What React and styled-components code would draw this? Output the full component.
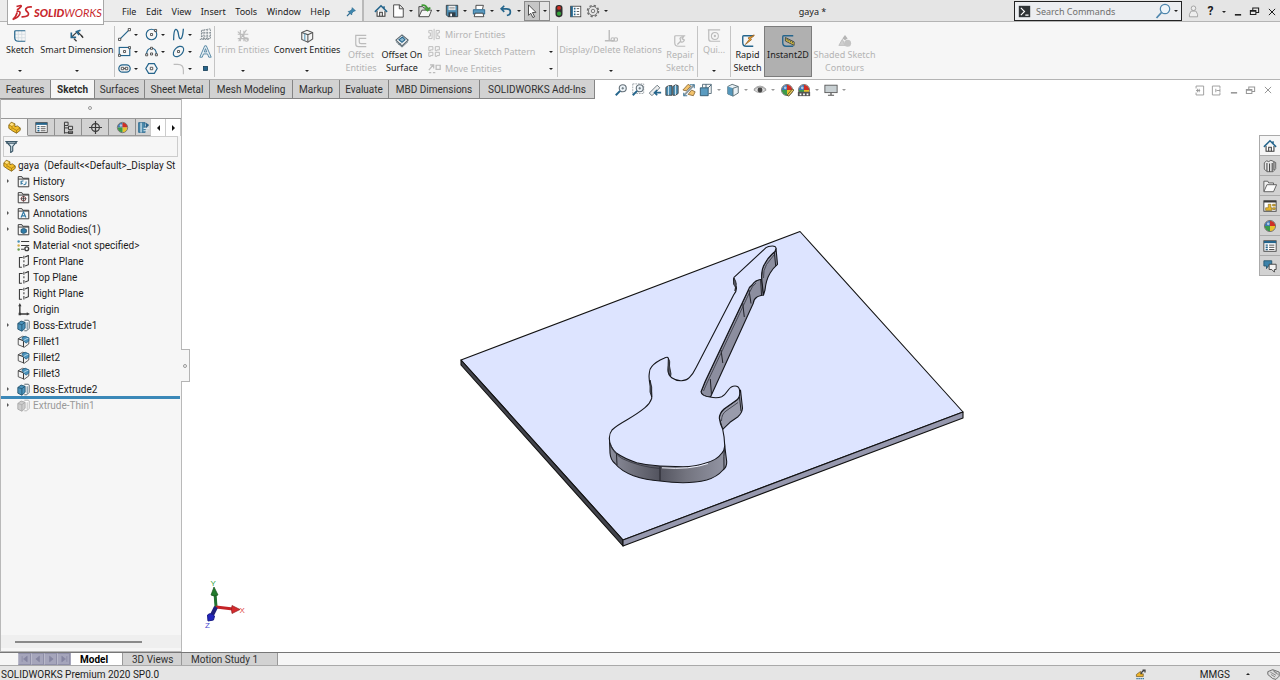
import React from 'react';
import styled, { createGlobalStyle, css } from 'styled-components';

const BLUE = '#25658c';
const GREY = '#bcbcbc';
const DARK = '#3a3a3a';

const line = (color, width = 1.3) => ({ fill: 'none', stroke: color, strokeWidth: width });

const bossExtrude = (stroke, fill, side) => (
  <>
    <path d="M9 1.500h5l1 1v9l-3 3H9" fill="#fff" stroke={side} strokeWidth="1.200" />
    <path d="M1 5.500l4-3 5 1.500v7.500l-4 3.500-5-2.500z" fill={fill} stroke={stroke} />
    <path d="M1 5.500L6 7l4-3M6 7v8M12.500 4v9" {...line(stroke, 0.9)} />
  </>
);

const folder = (
  <path d="M1.500 14.500V2h4.500l1 2h7.500v10.500zM1.500 5h13" fill="#f7f7f7" stroke={DARK} strokeWidth="1.200" />
);

const colorBall = (
  <>
    <path d="M8 8V2a6 6 0 0 0-6 6z" fill="#3f79b5" />
    <path d="M8 8h6a6 6 0 0 0-6-6z" fill="#cf2f26" />
    <path d="M8 8v6a6 6 0 0 0 6-6z" fill="#e7c22d" />
    <path d="M8 8H2a6 6 0 0 0 6 6z" fill="#3c9b4b" />
    <circle cx="8" cy="8" r="6.400" {...line('#56504e', 0.8)} />
    <circle cx="6" cy="5.500" r="1.500" fill="#fff" opacity=".6" />
  </>
);

const part = (
  <>
    <path d="M1 5L4 1.500l4.500 2V7l3-1L15 8.500v3L10.500 15 6 12.500 1 9z" fill="#f3bd27" stroke="#7d5e10" />
    <path d="M1 5L5 6.500V10M5 6.500l3-3M6 9l4.500 2.500L15 8.500M10.500 11.500V15" {...line('#8d6a14', 0.8)} />
    <path d="M4 2.500l3.500 1.200L5 6 2 4.700z" fill="#ffe38a" />
  </>
);

const propertyList = (
  <>
    <rect x="1" y="2" width="14" height="12" fill="#fff" stroke={DARK} />
    <path d="M1 3.500h14" stroke={BLUE} strokeWidth="2.500" />
    <path d="M3 7h2.500M3 9.500h2.500M3 12h2.500" stroke={BLUE} strokeWidth="1.600" />
    <path d="M7 7h6M7 9.500h6M7 12h6" stroke={DARK} />
  </>
);

const house = (
  <>
    <path d="M3.500 8v6h9V8" fill="#fff" stroke={DARK} strokeWidth="1.200" />
    <path d="M1 9l7-7 7 7M11.500 2.500v3" {...line(BLUE, 1.700)} />
    <path d="M6.500 14V9.500h3V14" {...line(DARK, 1.200)} />
  </>
);

const lens = (
  <>
    <circle cx="10" cy="6" r="4" fill="#eef5fa" stroke="#66727a" strokeWidth="1.300" />
    <path d="M7 9l-5 5" stroke={BLUE} strokeWidth="2.300" />
    <path d="M8.500 6h3M10 4.500v3" stroke="#66727a" />
  </>
);

const fillet = (
  <>
    <path d="M1.500 4.500L7 1.500l7.500 2v7.500L9 15l-7.500-3z" fill="#f4f4f4" stroke={DARK} />
    <path d="M1.500 4.500L8 7v8" {...line(DARK)} />
    <path d="M6 3.500l4-2 4.500 2v4L11 10 8 7z" fill="#4c94bd" stroke={BLUE} />
    <path d="M8 7l3-2 3-1" {...line('#cfe5f0', 1)} />
  </>
);

const plane = (
  <path
    d="M7 3H3v12h3M10 13.500l4-1.500V.5l-4 2M8.500 1v3.500M8.500 6.500V9M8.500 11v4.500"
    {...line(DARK, 1.300)}
  />
);

const sketchCorner = (color, lineWidth = 1.400) => (
  <path d="M14 2H3Q2 2 2 3v7q0 4 4 4h8" {...line(color, lineWidth)} />
);

const ICONS = {
  house,
  newDoc: <path d="M3 1h7l4 4v10H3zM9.500 1v4.500H14" fill="#fff" stroke={DARK} />,
  open: (
    <>
      <path d="M1 14V3h4.500l1 1.500H12V9z" fill="#d9d9d9" stroke={DARK} />
      <path d="M1 14.500l3.500-7.500h11l-3 7.500z" fill="#f6f6f6" stroke={DARK} />
      <path d="M4 1.500q6-1 7 5M7.500 5l3.500 2.500L14 4" {...line('#3f9b34', 1.900)} />
    </>
  ),
  save: (
    <>
      <path d="M1.500 1.500h13v13h-11l-2-2z" fill="#4b8bb0" stroke={DARK} />
      <rect x="4" y="2" width="8" height="5" fill="#eee" />
      <path d="M5 4h6M5 5.500h6" stroke="#888" strokeWidth=".7" />
      <rect x="4" y="9.500" width="8" height="5" fill="#303e48" />
      <rect x="6" y="11" width="2" height="3" fill="#fff" />
    </>
  ),
  print: (
    <>
      <path d="M4.500 6V1.500H13L12 6" fill="#fff" stroke={DARK} />
      <path d="M1.500 6.500h13v5h-13z" fill="#5a9ac0" stroke={BLUE} />
      <path d="M3.500 10.500h9l1 4h-11z" fill="#fff" stroke={DARK} />
    </>
  ),
  undo: <path d="M6 2L2.500 5.500 6 9M3 5.500h5.500q4.500 0 4.500 3.500t-4 4" {...line(BLUE, 1.900)} />,
  cursor: <path d="M4 1l8.500 8.500-4 .3 2.500 4.700-2 1-2.500-5L4 13z" fill="#fff" stroke={DARK} />,
  traffic: (
    <>
      <rect x="4" y="1" width="8" height="14" rx="3.500" fill="#303030" />
      <circle cx="8" cy="4.500" r="2.200" fill="#d02f25" />
      <circle cx="8" cy="11" r="2.400" fill="#35a33b" />
    </>
  ),
  options: (
    <>
      <rect x="2" y="1.500" width="12.500" height="13" fill="#fff" stroke={DARK} />
      <path d="M3.500 1.500v13" stroke={BLUE} strokeWidth="2.500" />
      <path d="M6 4.500h2M6 8h2M6 11.500h2" stroke={BLUE} strokeWidth="2" />
      <path d="M9.500 4.500h3M9.500 8h3M9.500 11.500h3" stroke={DARK} />
    </>
  ),
  gear: (
    <>
      <circle cx="8" cy="8" r="6.300" {...line('#6a6a6a', 1.700)} strokeDasharray="2.600 2.350" />
      <circle cx="8" cy="8" r="5.200" {...line('#6a6a6a', 1)} />
      <circle cx="8" cy="8" r="2" {...line('#6a6a6a', 1)} />
    </>
  ),
  pin: (
    <>
      <path d="M10 1l5 5-2.500.7-3 3-.5 3-5.500-5.500 3-.7 3-3z" fill="#3f87ae" stroke={BLUE} />
      <path d="M6 10l-4.500 4.500" stroke={BLUE} strokeWidth="1.700" />
    </>
  ),
  user: (
    <>
      <circle cx="8" cy="4" r="2.800" fill="#eee" stroke="#969696" />
      <path d="M5 7.500h6l2 4v3H3v-3z" fill="#eee" stroke="#969696" />
    </>
  ),
  console: (
    <>
      <rect x="1" y="1" width="14" height="14" fill="#2f3336" />
      <path d="M3.500 3.500L8 8l-4.500 4.500M9 12.500h4" {...line('#fff', 1.400)} />
    </>
  ),
  search: (
    <>
      <circle cx="10" cy="6" r="4.700" fill="#eef5fa" stroke="#4e86ad" strokeWidth="1.200" />
      <path d="M6.500 9.500L1.500 15" stroke="#4e86ad" strokeWidth="1.800" />
    </>
  ),
  minimize: <path d="M3 12.500h10" stroke="currentColor" strokeWidth="2.500" />,
  restore: <path d="M2 6.500h8v6H2zM2 7.500h8M5.500 6V3h8.500v6.500h-4" {...line('currentColor', 1.500)} />,
  close: <path d="M3 3l10 10M13 3L3 13" {...line('currentColor', 1.600)} />,
  dockLeft: <path d="M3 5V1.500h11v13H3V11M3 8h6M7.500 5.500v5M5 5.500v5" {...line('currentColor', 1.300)} />,
  dockRight: <path d="M13 5V1.500H2v13h11V11M7 5.500v5M13 5.500v5M8 8h5" {...line('currentColor', 1.300)} />,

  sketch: (
    <>
      <path d="M6 2v12M10 2v12M14 2v12M2 6h12M2 10h12" {...line('#d4dce1', 1)} />
      {sketchCorner(BLUE)}
    </>
  ),
  smartDim: (
    <>
      <path d="M2 9l6.500-6 6 6" {...line(DARK, 1.400)} />
      <path d="M1.500 4v5.500H7M12 1.500L7.500 3l3 4" {...line(BLUE, 1.900)} />
      <path d="M4.500 11l3 3M12.500 7l2.500 3" stroke={DARK} strokeWidth="1.600" />
    </>
  ),
  line: (
    <>
      <path d="M2 14L14 2" stroke={BLUE} strokeWidth="1.500" />
      <path d="M.6 12.600h2.800v2.800H.6zM12.600.6h2.800v2.800h-2.800z" fill="#fff" stroke={DARK} />
    </>
  ),
  circle: (
    <>
      <circle cx="8" cy="8" r="6.500" {...line(BLUE, 1.400)} />
      <path d="M6.800 6.800h2.500v2.500H6.800zM11.800 1.800h2.500v2.500h-2.500z" fill="#fff" stroke={DARK} />
    </>
  ),
  spline: <path d="M2 15C2-3 7 0 8 8s5 8 6-7" {...line(BLUE, 1.600)} />,
  sketchPlane: (
    <path d="M3 3l11-2v12H3zM3 6h11M3 10h11M6 2v11M10 2v11M1 14h11" {...line('#69757c', 1)} strokeDasharray="2 1" />
  ),
  rect: (
    <>
      <rect x="1.500" y="3" width="13" height="10" {...line(BLUE, 1.400)} />
      <path d="M6.800 6.800h2.500v2.500H6.800zM.5 11.500h2.500V14H.5zM13 2h2.500v2.500H13z" fill="#fff" stroke={DARK} />
    </>
  ),
  arc: (
    <>
      <path d="M2 12q0-8 6-8t6 8" {...line(BLUE, 1.400)} />
      <path d="M.8 10.800h2.500v2.500H.8zM12.800 10.800h2.500v2.500h-2.500zM6.800 9.800h2.500v2.500H6.800zM6.800 2.800h2.500v2.500H6.800z" fill="#fff" stroke={DARK} />
    </>
  ),
  ellipse: (
    <>
      <ellipse cx="8" cy="8" rx="7.500" ry="5" transform="rotate(-45 8 8)" {...line(BLUE, 1.400)} />
      <path d="M6.800 6.800h2.500v2.500H6.800z" fill="#fff" stroke={DARK} />
    </>
  ),
  textTool: (
    <path d="M1 15L7 1h2l6 14h-3l-1.500-4h-5L4 15zM6.500 8.500h3L8 4.500z" fill="#e8f0f5" stroke="#3f7799" />
  ),
  slot: (
    <>
      <rect x="1" y="3.500" width="14" height="9" rx="4.500" {...line(BLUE, 1.500)} />
      <path d="M4 6.500h3v3H4zM9 6.500h3v3H9zM7 8h2" fill="#fff" stroke={DARK} />
    </>
  ),
  polygon: (
    <>
      <path d="M4.500 2h7L15 8l-3.500 6h-7L1 8z" {...line(BLUE, 1.500)} />
      <path d="M6.500 6.500h3v3h-3z" fill="#fff" stroke={DARK} />
    </>
  ),
  filletTool: <path d="M2 3h5q7 0 7 7v5" {...line(GREY, 1.400)} />,
  point: <rect x="5.500" y="5.500" width="5" height="5" fill={BLUE} stroke="#173e56" />,
  trim: (
    <>
      <path d="M2 3l12 10M5 1v13M12 1L3 14M2 11h12M9 2v12M2 6h12" {...line(GREY, 1.200)} />
      <circle cx="12" cy="12" r="2" {...line(GREY, 1.300)} />
    </>
  ),
  convert: (
    <>
      <path d="M2 4l6-2.500L14.500 4v7.500L9 15l-7-3z" fill="#f4f4f4" stroke="#555" strokeWidth="1.200" />
      <path d="M2 4l7 2.500V15M9 6.500L14.500 4" {...line('#555', 1.200)} />
      <path d="M5.500 5v8" stroke="#5d9bbb" strokeWidth="1.300" />
    </>
  ),
  offset: <path d="M14 1.500H2v10q0 3 3 3h9M14 5H6v4q0 2 2 2h6" {...line(GREY, 1.400)} />,
  offsetSurface: (
    <>
      <path d="M1 7l7-6 7 6-7 6.500z" fill="#f2f4f5" stroke="#55626a" strokeWidth="1.200" />
      <path d="M4.500 6.500l4-3 3 3-3.500 3z" fill="#8fb9d0" stroke={BLUE} strokeWidth="1.200" />
      <path d="M1 8.500L8 15l7-6.500M4 12l3-1" {...line('#60727d', 1.100)} />
    </>
  ),
  mirror: <path d="M7.500 1v14M1 3h4v10H1V10h2V6H1zM14 3h-4v10h4V10h-2V6h2z" {...line(GREY, 1.100)} />,
  pattern: <path d="M1 2h5v4H3v1H1zM9 2h5v4h-3v1H9zM1 9h5v4H3v1H1zM9 9h5v4h-3v1H9z" {...line(GREY, 1.200)} />,
  move: <path d="M1 10l5-6M2.500 3.500H7V8M10 4h5v5h-5zM1 13h3M6 13h3" {...line(GREY, 1.500)} />,
  relations: (
    <>
      <path d="M6 1v12M1 13.500h11" {...line(GREY, 1.600)} />
      <circle cx="10" cy="12" r="2" {...line(GREY)} />
      <circle cx="13.500" cy="12" r="2" {...line(GREY)} />
    </>
  ),
  repair: (
    <>
      {sketchCorner(GREY)}
      <path d="M5 12l4-4M8 5q1-2 4-2l-1.500 2.500L13 7q-1 3-4 2z" {...line(GREY, 1.400)} />
    </>
  ),
  quickSnap: (
    <>
      <path d="M1 1h14M2 1v10q0 3 3 3h10" {...line(GREY, 1.400)} />
      <circle cx="9" cy="8" r="4" {...line(GREY, 1.200)} />
      <circle cx="9" cy="8" r="1.300" fill={GREY} />
    </>
  ),
  rapid: (
    <>
      {sketchCorner(BLUE, 1.600)}
      <path d="M15 1L8 4.500 9.500 6 5 12l7-5.500L11 5l4-3z" fill="#f2a32c" stroke="#8a551a" strokeWidth=".8" />
    </>
  ),
  instant: (
    <>
      {sketchCorner(BLUE, 1.600)}
      <path d="M5 4l10 5v4L5 8z" fill="#e4c63d" stroke="#36424a" />
      <path d="M7 5.500v2M9 6.500v2M11 7.500v2M13 8.500v2" stroke="#36424a" />
    </>
  ),
  shaded: (
    <>
      <path d="M8 1l3 4-3 2-3-2z" fill="#b5b5b5" />
      <path d="M1 13l4-7 3 7z" fill="#cfcfcf" stroke={GREY} />
      <circle cx="11" cy="10.500" r="4" fill="#c4c4c4" />
    </>
  ),

  zoomFit: lens,
  zoomArea: (
    <>
      <rect x="2" y="1" width="12.500" height="11" {...line('#98a0a5', 1)} strokeDasharray="2 1" />
      {lens}
    </>
  ),
  previous: (
    <>
      <path d="M1.500 11.500l9-9 3 3-9 9z" fill="#eee" stroke="#5d6c75" />
      <path d="M15 11H8M10.500 8L7.500 11l3 3" {...line(BLUE, 1.900)} />
    </>
  ),
  section: (
    <>
      <path d="M1 5l3-2h4v11H1zM9 4l3-2 3 1v9l-3 2H9z" fill="#4d8fb4" stroke={DARK} />
      <path d="M4 3v11M12 2v12" stroke="#d6e7f0" />
    </>
  ),
  dynamic: (
    <>
      <path d="M1 8l6-6.500 3 2L5 9zM7 13l4-5 4 2-2 4.500z" fill="#f3c36c" stroke="#8c6c3c" />
      <path d="M2 14.500L14 2" stroke="#8c9aa2" strokeWidth="2.200" />
      <path d="M9 2h5v4M2 11v3.500h4" {...line('#457c9d', 1.200)} />
    </>
  ),
  orient: (
    <>
      <path d="M4 5V1.500h10V12h-3" fill="#f5f5f5" stroke="#536a78" />
      <path d="M1.500 5.500h9v9h-9z" fill="#5a9bc0" stroke="#2d536a" />
      <path d="M10.500 5.500L14 2M8 1.500v4" {...line('#2d536a', 1)} />
    </>
  ),
  display: (
    <>
      <path d="M2 4l5-2.500L14 4v7.500L8 15l-6-2.500z" fill="#e9f1f5" stroke="#54676f" />
      <path d="M2 4l6 2v9l-6-2.500z" fill="#5597bb" />
      <path d="M8 6l6-2M8 6v9" {...line('#54676f', 1)} />
    </>
  ),
  eye: (
    <>
      <path d="M1 8q7-7 14 0-7 6-14 0z" fill="#ddd" stroke="#999" />
      <path d="M1 7q7-7 14 0" {...line('#999', 1)} />
      <circle cx="8" cy="8" r="2.800" fill="#454545" />
    </>
  ),
  appearance: (
    <>
      {colorBall}
      <path d="M8 14l6-7 2 1-6 7z" fill="#edcb5f" stroke="#58502e" />
    </>
  ),
  scene: (
    <>
      {colorBall}
      <path d="M1 10h14v5H1z" fill="#555" />
      <path d="M3 12h2v2H3zM7 12h2v2H7zM11 12h2v2h-2z" fill="#fff" />
    </>
  ),
  monitor: (
    <>
      <rect x="1" y="2.500" width="14" height="8.500" fill="#c8d0d3" stroke="#555" />
      <path d="M8 11v3M4.500 14h7" stroke="#555" strokeWidth="1.400" />
    </>
  ),

  part,
  propertyList,
  config: (
    <path d="M3 15.500V1.500h4.500v4H3M3 8.500h5M8 6.500h5v4H8zM3 14.500h10M8 12.500h5v3H8z" fill="none" stroke={DARK} strokeWidth="1.200" />
  ),
  target: (
    <>
      <circle cx="8" cy="8" r="4.800" {...line(DARK, 1.500)} />
      <path d="M8 0v16M0 8h16" stroke={DARK} strokeWidth="1.500" />
    </>
  ),
  colorBall,
  cam: (
    <>
      <path d="M2 2h8v12H2z" fill="#4b89ab" stroke={BLUE} />
      <path d="M5 2v12M10 5h5M8 9h7M8 12h5" stroke="#dbe7ee" strokeWidth="1.500" />
      <path d="M11 2l4 3-4 4z" fill="#2b6288" />
    </>
  ),
  filter: (
    <path d="M1.500 2h13L9.500 8v5.500L7 15.500V8zM1.500 4h13" fill="#dce9f0" stroke="#3c5868" strokeWidth="1.400" />
  ),
  history: (
    <>
      {folder}
      <path d="M5 12V8l3-1M8 12q4 0 3-4M5 9l2 2" {...line('#3c7ea5', 1.300)} />
    </>
  ),
  sensors: (
    <>
      {folder}
      <circle cx="8" cy="9.500" r="2.800" {...line('#8a4747', 1.200)} />
      <path d="M8 6v7M4.500 9.500h7" stroke={DARK} />
    </>
  ),
  annotations: (
    <>
      {folder}
      <path d="M5 13l3-7 3 7M6 11h4" {...line('#2f78a4', 1.400)} />
    </>
  ),
  bodies: (
    <>
      {folder}
      <path d="M5 8l3-1.500L11.500 8v3.500L8 13l-3-1.500z" fill="#2f7ba7" stroke="#1d4c67" />
    </>
  ),
  material: (
    <>
      <path d="M5 3h10M5 8h10M5 12.500h4" stroke={DARK} strokeWidth="1.300" />
      <circle cx="2" cy="3" r="1.500" fill="#4990b5" />
      <circle cx="2" cy="8" r="1.500" fill="#d4b04a" />
      <circle cx="2" cy="13" r="1.500" fill="#6b9d52" />
      <circle cx="12" cy="12" r="2.300" fill="#fff" stroke={DARK} strokeWidth="1.700" />
    </>
  ),
  plane,
  origin: (
    <>
      <path d="M3.500 3v10.500H13" {...line(DARK, 1.700)} />
      <path d="M3.500 0l2 4h-4zM16 13.500l-4-2v4zM2 12h3v3H2z" fill={DARK} />
    </>
  ),
  boss: bossExtrude('#1d4c67', '#4b93bb', '#59666d'),
  bossOff: bossExtrude('#a5a5a5', '#cdcdcd', '#b5b5b5'),
  fillet,

  library: (
    <>
      <path d="M1.500 4.500L4 2l2.500 1L9 1.500l2.500 1L14.500 4v7l-3 3.500h-7l-3-3z" fill="#e8e8e8" stroke="#555" />
      <path d="M4.500 4.500v9.500M7.500 5v9.500M10.500 4.500v9.500M12.500 3.500v9" stroke="#444" strokeWidth="1.200" />
    </>
  ),
  explorer: (
    <>
      <path d="M1 14V2.500h4.500l1 2H12V7" fill="#eee" stroke="#555" />
      <path d="M1 14.500L4.500 6.500h11L12 14.500z" fill="#fafafa" stroke="#555" />
    </>
  ),
  palette: (
    <>
      <rect x="1" y="2" width="14" height="12" fill="#fff" stroke={DARK} />
      <path d="M1 3h14" stroke={DARK} strokeWidth="2" />
      <path d="M3 13V10h3V6h3v4h1v3zM11 6h3v2h-3zM11 10h3v2h-3z" fill="#e8b72c" stroke="#7b6420" strokeWidth=".7" />
    </>
  ),
  forum: (
    <>
      <path d="M1 2h9v6H6l-2 3V8H1z" fill="#3b82aa" stroke="#27566f" />
      <path d="M7 6h8v6h-2v3l-3-3H7z" fill="#f3f3f3" stroke={DARK} />
    </>
  ),
  rebuild: (
    <>
      <path d="M2 11h10V7l-4 .5V3.500L2 8z" fill="#f0b62b" stroke="#6f531b" />
      <path d="M9 7q1-4 4-4.500M11 1.500h3.500V5" {...line(DARK, 1.900)} />
      <path d="M2 14h12" stroke="#2e74a0" strokeWidth="2" strokeDasharray="2 1" />
    </>
  ),
  tag: (
    <>
      <path d="M1 4.500l6-2.500 8 3v5L11 14l-4-1-6-5z" fill="#dcdcdc" stroke="#555" />
      <path d="M4 5l7 4M5 8l5 3M9 5l5 3M7 3l5 3" {...line('#777', 1)} />
    </>
  ),
};

const Icon = ({ name, size = 14 }) => (
  <IconSvg viewBox="0 0 16 16" width={size} height={size} aria-hidden="true">
    {ICONS[name]}
  </IconSvg>
);

const menus = ['File', 'Edit', 'View', 'Insert', 'Tools', 'Window', 'Help'];

const quickTools = [
  { icon: 'newDoc', label: 'New' },
  { icon: 'open', label: 'Open' },
  { icon: 'save', label: 'Save' },
  { icon: 'print', label: 'Print' },
  { icon: 'undo', label: 'Undo' },
];

const sketchTools = [
  { icon: 'line', caret: true },
  { icon: 'circle', caret: true },
  { icon: 'spline', caret: true },
  { icon: 'sketchPlane' },
  { icon: 'rect', caret: true },
  { icon: 'arc', caret: true },
  { icon: 'ellipse', caret: true },
  { icon: 'textTool' },
  { icon: 'slot', caret: true },
  { icon: 'polygon' },
  { icon: 'filletTool', caret: true },
  { icon: 'point' },
];

const tabs = [
  { label: 'Features', width: 51 },
  { label: 'Sketch', width: 44, active: true },
  { label: 'Surfaces', width: 50 },
  { label: 'Sheet Metal', width: 65 },
  { label: 'Mesh Modeling', width: 83 },
  { label: 'Markup', width: 47 },
  { label: 'Evaluate', width: 49 },
  { label: 'MBD Dimensions', width: 91 },
  { label: 'SOLIDWORKS Add-Ins', width: 115 },
];

const viewTools = [
  { icon: 'zoomFit' },
  { icon: 'zoomArea' },
  { icon: 'previous' },
  { icon: 'section' },
  { icon: 'dynamic' },
  { icon: 'orient', caret: true },
  { icon: 'display', caret: true },
  { icon: 'eye', caret: true },
  { icon: 'appearance' },
  { icon: 'scene', caret: true },
  { icon: 'monitor', caret: true },
];

const tree = [
  { icon: 'history', label: 'History', open: true },
  { icon: 'sensors', label: 'Sensors' },
  { icon: 'annotations', label: 'Annotations', open: true },
  { icon: 'bodies', label: 'Solid Bodies(1)', open: true },
  { icon: 'material', label: 'Material <not specified>' },
  { icon: 'plane', label: 'Front Plane' },
  { icon: 'plane', label: 'Top Plane' },
  { icon: 'plane', label: 'Right Plane' },
  { icon: 'origin', label: 'Origin' },
  { icon: 'boss', label: 'Boss-Extrude1', open: true },
  { icon: 'fillet', label: 'Fillet1' },
  { icon: 'fillet', label: 'Fillet2' },
  { icon: 'fillet', label: 'Fillet3' },
  { icon: 'boss', label: 'Boss-Extrude2', open: true, rollback: true },
  { icon: 'bossOff', label: 'Extrude-Thin1', open: true, muted: true },
];

const panelTabs = ['part', 'propertyList', 'config', 'target', 'colorBall'];
const taskPane = ['house', 'library', 'explorer', 'palette', 'colorBall', 'propertyList', 'forum'];

const Command = ({ icon, lines, width, low, caret, disabled, pressed }) => (
  <CommandButton $width={width} $low={low} $pressed={pressed} disabled={disabled}>
    <Icon name={icon} size={14} />
    <CommandText>
      {lines.map((text) => (
        <span key={text}>{text}</span>
      ))}
    </CommandText>
    {caret && <CommandCaret><Caret /></CommandCaret>}
  </CommandButton>
);

const TitleBar = () => (
  <Header>
    <MenuArea>
      <Logo>
        <svg width="21" height="17" viewBox="0 0 21 17" aria-hidden="true">
          <path
            d="M4.500 2.500L8.500 1.500Q11 1.800 5 6M4.500 7.500Q9 6.500 7.800 10 6.500 13.500.8 15.500 4.500 12 5.200 8.500M20 3Q15.500 2.500 14 4.500 13 6 15.500 8 17.500 10 15.500 11.800 13.500 13 9.500 12.800"
            {...line('#c8282e', 1.700)}
          />
        </svg>
        <LogoText><b>SOLID</b>WORKS</LogoText>
      </Logo>
      <Menu>
        {menus.map((menu) => (
          <MenuButton key={menu}>{menu}</MenuButton>
        ))}
      </Menu>
      <IconButton $width={22} aria-label="Pin menu"><Icon name="pin" size={10} /></IconButton>
    </MenuArea>
    <QuickBar>
      <IconButton $width={17} aria-label="Home"><Icon name="house" size={14} /></IconButton>
      {quickTools.map((tool) => (
        <ToolButton key={tool.icon} aria-label={tool.label}>
          <ToolSlot><Icon name={tool.icon} size={14} /></ToolSlot>
          <CaretSlot><Caret /></CaretSlot>
        </ToolButton>
      ))}
      <SelectTool aria-label="Select">
        <ToolSlot><Icon name="cursor" size={14} /></ToolSlot>
        <CaretSlot><Caret /></CaretSlot>
      </SelectTool>
      <IconButton $width={17} aria-label="Rebuild"><Icon name="traffic" size={14} /></IconButton>
      <IconButton $width={17} aria-label="File properties"><Icon name="options" size={13} /></IconButton>
      <ToolButton aria-label="Options">
        <ToolSlot><Icon name="gear" size={14} /></ToolSlot>
        <CaretSlot><Caret /></CaretSlot>
      </ToolButton>
    </QuickBar>
    <DocumentName>gaya *</DocumentName>
    <SearchBox>
      <Icon name="console" size={13} />
      <SearchInput aria-label="Search Commands" placeholder="Search Commands" />
      <Icon name="search" size={16} />
      <CaretSlot><Caret /></CaretSlot>
    </SearchBox>
    <WindowTools>
      <IconButton $width={18} aria-label="Login"><Icon name="user" size={13} /></IconButton>
      <HelpButton>?</HelpButton>
      <CaretSlot><Caret /></CaretSlot>
      <IconButton $width={17} aria-label="Minimize"><Icon name="minimize" size={10} /></IconButton>
      <IconButton $width={17} aria-label="Restore"><Icon name="restore" size={11} /></IconButton>
      <IconButton $width={17} aria-label="Close"><Icon name="close" size={10} /></IconButton>
    </WindowTools>
  </Header>
);

const Ribbon = () => (
  <RibbonBar>
    <Command icon="sketch" lines={['Sketch']} width={40} caret />
    <Command icon="smartDim" lines={['Smart Dimension']} width={74} caret />
    <Divider />
    <ToolGrid>
      {sketchTools.map((tool) => (
        <GridTool key={tool.icon} aria-label={tool.icon}>
          <Icon name={tool.icon} size={13} />
          {tool.caret && <CaretSlot><Caret /></CaretSlot>}
        </GridTool>
      ))}
    </ToolGrid>
    <Divider />
    <Command icon="trim" lines={['Trim Entities']} width={56} caret disabled />
    <Command icon="convert" lines={['Convert Entities']} width={72} caret />
    <Command icon="offset" lines={['Offset', 'Entities']} width={36} low disabled />
    <Command icon="offsetSurface" lines={['Offset On', 'Surface']} width={46} low />
    <CommandList>
      <ListCommand disabled><Icon name="mirror" size={13} /><span>Mirror Entities</span></ListCommand>
      <ListCommand disabled><Icon name="pattern" size={13} /><span>Linear Sketch Pattern</span><Caret /></ListCommand>
      <ListCommand disabled><Icon name="move" size={13} /><span>Move Entities</span><Caret /></ListCommand>
    </CommandList>
    <Divider />
    <Command icon="relations" lines={['Display/Delete Relations']} width={105} caret disabled />
    <Command icon="repair" lines={['Repair', 'Sketch']} width={34} low disabled />
    <Divider />
    <Command icon="quickSnap" lines={['Qui...']} width={32} caret disabled />
    <Divider />
    <Command icon="rapid" lines={['Rapid', 'Sketch']} width={33} low />
    <Command icon="instant" lines={['Instant2D']} width={48} low pressed />
    <Command icon="shaded" lines={['Shaded Sketch', 'Contours']} width={65} low disabled />
  </RibbonBar>
);

const TabRow = () => (
  <TabsBar>
    <Tabs>
      {tabs.map((tab) => (
        <Tab key={tab.label} $width={tab.width} $active={tab.active}>{tab.label}</Tab>
      ))}
    </Tabs>
    <ViewToolbar>
      {viewTools.map((tool) => (
        <ViewTool key={tool.icon} aria-label={tool.icon}>
          <ToolSlot><Icon name={tool.icon} size={14} /></ToolSlot>
          {tool.caret && <CaretSlot><Caret $soft /></CaretSlot>}
        </ViewTool>
      ))}
    </ViewToolbar>
    <DocumentTools>
      <IconButton $width={17} aria-label="Dock left"><Icon name="dockLeft" size={11} /></IconButton>
      <IconButton $width={17} aria-label="Dock right"><Icon name="dockRight" size={11} /></IconButton>
      <IconButton $width={17} aria-label="Minimize document"><Icon name="minimize" size={10} /></IconButton>
      <IconButton $width={17} aria-label="Restore document"><Icon name="restore" size={11} /></IconButton>
      <IconButton $width={17} aria-label="Close document"><Icon name="close" size={10} /></IconButton>
    </DocumentTools>
  </TabsBar>
);

const FeaturePanel = () => (
  <Panel>
    <PanelTop><Grip /></PanelTop>
    <PanelTabs>
      {panelTabs.map((icon, index) => (
        <PanelTab key={icon} $active={index === 0} aria-label={icon}><Icon name={icon} size={13} /></PanelTab>
      ))}
      <PanelTab $narrow aria-label="CAM"><Icon name="cam" size={13} /></PanelTab>
      <PanelArrow aria-label="Previous tab"><SideCaret $left /></PanelArrow>
      <PanelArrow aria-label="Next tab"><SideCaret /></PanelArrow>
    </PanelTabs>
    <FilterBox>
      <Icon name="filter" size={13} />
      <FilterInput aria-label="Filter tree" />
    </FilterBox>
    <TreeRoot>
      <Icon name="part" size={13} />
      <span>gaya&nbsp; (Default&lt;&lt;Default&gt;_Display St</span>
    </TreeRoot>
    <Tree>
      {tree.map((item) => (
        <TreeItem key={item.label} $muted={item.muted} $rollback={item.rollback}>
          <Expander>{item.open && <SideCaret $small />}</Expander>
          <Icon name={item.icon} size={13} />
          <span>{item.label}</span>
        </TreeItem>
      ))}
    </Tree>
    <PanelScroll><Thumb /></PanelScroll>
  </Panel>
);

const GuitarModel = () => (
  <ModelSvg viewBox="182 99 1098 553" aria-label="Guitar model">
    <defs>
      <linearGradient id="bodySide" x1="610" y1="0" x2="727" y2="0" gradientUnits="userSpaceOnUse">
        <stop offset="0" stopColor="#8b8d9c" />
        <stop offset=".15" stopColor="#777884" />
        <stop offset=".42" stopColor="#53545f" />
        <stop offset=".65" stopColor="#73747f" />
        <stop offset="1" stopColor="#9496a5" />
      </linearGradient>
    </defs>
    <g stroke="#111" strokeWidth="1.100" strokeLinejoin="round">
      <path d="M461 360L800 231.500 963 412 623 540z" fill="#dde4ff" />
      <path d="M461 360L623 540v6L461 365z" fill="#42434b" />
      <path d="M623 540L963 412v6L623 546z" fill="#9698ae" />
    </g>
    <g stroke="#15161b" strokeWidth="1.100" strokeLinejoin="round">
      <path
        d="M609.500 438L610 453Q610.500 460 615 463.500Q621 471 633.500 475.700Q646 480 660 481Q672 482.700 683 482.700Q696 482.700 706.700 480Q717 477 723 470Q727 467 726.700 461.500L724.500 444z"
        fill="url(#bodySide)"
      />
      <path
        d="M736.700 400L724 409Q719.500 413 719.300 418.300L722.700 429.300 730 422.300 738 416.700Q742 413 742.500 408.300L740.500 390z"
        fill="#999bab"
      />
      <path
        d="M701 391.700L705 381.700 748.300 290Q749 287 752 285 755 280 761.700 279.300L763.500 295Q758 296 756.700 297.300 753.500 299.500 753.300 303.300L710.500 397Q701.500 396 701 391.700z"
        fill="#8c8e9f"
      />
      <path d="M761.700 279.300Q761 269 765 263.300 768 257 775 251.500L776 248.500 777.500 264.300Q773 268 770 273.300 766 280 765 290L763.500 295z" fill="#8c8e9f" />
      <path
        d="M772.300 246Q776 246 776 248.500L775 251.500Q768 257 765 263.300 761 269 761.700 279.300 755 280 752 285 749 287 748.300 290L705 381.700 701 391.700Q701.500 396 710 397 717 398.500 721.700 396.700 725 395 728.300 390 731 386 735 386 738.500 386 739.300 389 741 397 736.700 400L724 409Q719.500 413 719.300 418.300 720 424 722.700 429.300 724.500 437 724.700 445 725 450 721.700 453.300 717 460 706.700 462.700 695 466.700 683 466.700L660 466Q648 465.500 636.700 462.700 624 458.500 616.700 453.300 609.300 447 609.300 438.300 609.500 433 612 430 616 426 626.700 420 638 413.500 645 407.700 650 403.500 651.700 398.300 652 392 650.300 385 648.500 379 649.300 373.300 649.500 369 651.700 366.700 656 361.500 664 358.300 667.500 356.500 668.300 358 669.500 360 668 370 668 375 671.700 377.700 676 380.700 680.700 380.700 686 381 689.300 377.700 693 374 696 367.700L734 294.300Q737.500 290 736 286 732.500 282 734 277.300L766 247.700Q768 246 772.300 246z"
        fill="#dde4ff"
      />
      <path
        d="M668.300 358.500Q670.500 361 669.500 366L671 374 670.500 376.500Q667.500 373 668 367zM734 278Q736 281 736.300 284L735 291Q736.500 287 733.500 284zM650 380L651.700 387 651.700 397 650 392z"
        fill="#5b5d69"
        strokeWidth=".8"
      />
    </g>
    <g {...line('#202128', 1)}>
      <path d="M616.500 453.500L617 465M660 466.500V481M724.500 447Q723.500 455 724 469M739.500 397L741 411" />
      <path d="M710.300 379L711.500 395M721 350L722.800 363M742.700 303L744.300 317M749 290L751 303.500M760.700 280L761.500 295M774.300 252L775.700 266" />
    </g>
    <g {...line('#34353d', 0.8)}>
      <path d="M703.500 391L706.500 384 750 291.500Q752 286 756 283M721.500 421Q721.500 414 726 411L738 402.500M763.500 278Q763 270 766.500 264.500L774 255" />
      <path d="M610.500 444Q613 453 622 458.500 640 467 660 468.500" />
    </g>
    <path d="M662 467.800Q690 470 708 463.500" {...line('#f2f4ff', 1)} />
  </ModelSvg>
);

const Triad = () => (
  <TriadSvg viewBox="200 575 50 56" width="50" height="56" aria-hidden="true">
    <path d="M216 607l-1-14" stroke="#237230" strokeWidth="3" />
    <path d="M214 587l4 8q-4 2-7 0z" fill="#237b2d" stroke="#155018" strokeWidth=".7" />
    <path d="M216 607l17 2" stroke="#c52227" strokeWidth="3" />
    <path d="M240 609.500l-8-4q-1 4 0 8z" fill="#d62a2d" stroke="#8e1f21" strokeWidth=".7" />
    <path d="M216 607l-4 8" stroke="#20207d" strokeWidth="4" />
    <path d="M208 621l-.5-6q3-3 7 1l-1 4z" fill="#2225bd" stroke="#191c87" />
    <AxisLabel x="210.500" y="586" $color="#35a53b">Y</AxisLabel>
    <AxisLabel x="239.500" y="613" $color="#e04a4a">X</AxisLabel>
    <AxisLabel x="205" y="628" $color="#4a4ad0">Z</AxisLabel>
  </TriadSvg>
);

const navPaths = ['M3 3v8M10 3v8L5 7z', 'M9 3v8L4 7z', 'M5 3v8l5-4z', 'M11 3v8M4 3v8l5-4z'];

const App = () => (
  <Page>
    <GlobalStyle />
    <TitleBar />
    <Ribbon />
    <TabRow />
    <Workspace>
      <FeaturePanel />
      <Canvas>
        <GuitarModel />
        <Triad />
        <PanelHandle aria-label="Collapse panel"><Grip /></PanelHandle>
        <TaskPane>
          {taskPane.map((icon, index) => (
            <TaskButton key={icon} $active={index === 0} aria-label={icon}><Icon name={icon} size={14} /></TaskButton>
          ))}
        </TaskPane>
      </Canvas>
    </Workspace>
    <BottomTabs>
      <NavButtons>
        {navPaths.map((d) => (
          <NavButton key={d} aria-label="Scroll tabs">
            <svg width="10" height="10" viewBox="0 0 14 14" aria-hidden="true">
              <path d={d} fill="#8585a0" stroke="#8585a0" />
            </svg>
          </NavButton>
        ))}
      </NavButtons>
      <BottomTab $width={52} $active>Model</BottomTab>
      <BottomTab $width={59}>3D Views</BottomTab>
      <BottomTab $width={96}>Motion Study 1</BottomTab>
    </BottomTabs>
    <StatusBar>
      <StatusText>SOLIDWORKS Premium 2020 SP0.0</StatusText>
      <Icon name="rebuild" size={11} />
      <Units>MMGS</Units>
      <Caret $up />
      <Icon name="tag" size={13} />
    </StatusBar>
  </Page>
);

export default App;

const GlobalStyle = createGlobalStyle`
  * {
    box-sizing: border-box;
  }
  body {
    margin: 0;
    background: #fff;
    color: #1c1c1c;
    font-family: Roboto, "Noto Sans", sans-serif;
    font-size: 10px;
    line-height: 13px;
  }
  button {
    margin: 0;
    padding: 0;
    border: 0;
    background: none;
    color: inherit;
    font: inherit;
    white-space: nowrap;
  }
  input {
    min-width: 0;
    padding: 0;
    border: 0;
    outline: 0;
    background: none;
    font: inherit;
  }
`;

const center = css`
  display: flex;
  align-items: center;
  justify-content: center;
`;

const smallText = css`
  font-family: "Noto Sans", "Open Sans", sans-serif;
  font-size: 9px;
`;

const Page = styled.div`
  display: flex;
  flex-direction: column;
  height: 100vh;
  overflow: hidden;
`;

const IconSvg = styled.svg`
  display: block;
  flex: none;
`;

const Caret = styled.span`
  width: 0;
  height: 0;
  flex: none;
  border: 2px solid transparent;
  border-bottom-width: 0;
  border-top-color: ${({ $soft }) => ($soft ? '#999' : '#222')};
  transform: ${({ $up }) => ($up ? 'rotate(180deg)' : 'none')};
`;

const SideCaret = styled.span`
  width: 0;
  height: 0;
  border: ${({ $small }) => ($small ? '2px' : '3px')} solid transparent;
  border-right-width: 0;
  border-left-color: ${({ $small }) => ($small ? '#555' : '#111')};
  transform: ${({ $left }) => ($left ? 'rotate(180deg)' : 'none')};
`;

const CaretSlot = styled.span`
  ${center}
  width: 10px;
  flex: none;
`;

const ToolSlot = styled.span`
  ${center}
  width: 17px;
`;

const IconButton = styled.button`
  ${center}
  width: ${({ $width }) => $width}px;
  flex: none;
`;

/* title bar */

const Header = styled.header`
  display: flex;
  height: 22px;
  flex: none;
  background: #e5e5e5;
  border-bottom: 1px solid #b4b4b4;
`;

const MenuArea = styled.div`
  display: flex;
  align-items: center;
  width: 364px;
  flex: none;
  padding: 2px 0 0 7px;
  background: #ececec;
  border-right: 2px solid #b9b9b9;
`;

const Logo = styled.div`
  display: flex;
  align-items: center;
  align-self: flex-start;
  gap: 1px;
  position: relative;
  z-index: 1;
  width: 97px;
  height: 25px;
  margin-top: -2px;
  padding-left: 4px;
  background: #fff;
  border: 1px solid #a8a8a8;
  border-top: 0;
`;

const LogoText = styled.span`
  color: #c8282e;
  font-family: Lato, sans-serif;
  font-size: 11px;
  font-style: italic;

  b {
    font-weight: 900;
  }
`;

const Menu = styled.nav`
  display: flex;
  justify-content: space-between;
  flex: 1;
  padding: 0 10px 0 18px;
`;

const MenuButton = styled.button`
  ${smallText}
`;

const QuickBar = styled.div`
  display: flex;
  padding: 1px 0 0 8px;
`;

const ToolButton = styled.button`
  display: flex;
  align-items: center;
`;

const SelectTool = styled(ToolButton)`
  background: #c6c6c6;
  border: 1px solid #8a8a8a;
  width: 26px;

  ${CaretSlot} {
    align-self: stretch;
    background: #e5e5e5;
    border-left: 1px solid #8a8a8a;
  }
`;

const DocumentName = styled.div`
  ${center}
  ${smallText}
  flex: 1;
  padding-top: 2px;
`;

const SearchBox = styled.label`
  display: flex;
  align-items: center;
  align-self: flex-end;
  width: 168px;
  height: 20px;
  padding-left: 3px;
  background: #eceef1;
  border: 1px solid #222;
`;

const SearchInput = styled.input`
  flex: 1;
  padding-left: 5px;
  ${smallText}

  &::placeholder {
    color: #6e6e6e;
    opacity: 1;
  }
`;

const WindowTools = styled.div`
  display: flex;
  align-items: center;
  padding: 2px 0 0 2px;
`;

const HelpButton = styled.button`
  width: 17px;
  font-size: 12px;
  font-weight: 700;
`;

/* ribbon */

const RibbonBar = styled.div`
  display: flex;
  height: 58px;
  flex: none;
  padding: 4px 0 2px;
  background: #f6f6f6;
  border-bottom: 1px solid #b4b4b4;
  ${smallText}
`;

const Divider = styled.span`
  width: 1px;
  flex: none;
  background: #c4c4c4;
`;

const CommandButton = styled.button`
  display: flex;
  flex-direction: column;
  align-items: center;
  width: ${({ $width }) => $width}px;
  flex: none;
  padding-top: ${({ $low }) => ($low ? '8px' : '3px')};
  color: ${({ disabled }) => (disabled ? '#b4b4b4' : '#1c1c1c')};
  background: ${({ $pressed }) => ($pressed ? '#b0b0b0' : 'none')};
  box-shadow: ${({ $pressed }) => ($pressed ? 'inset 0 0 0 1px #7c7c7c' : 'none')};
`;

const CommandText = styled.span`
  display: flex;
  flex-direction: column;
  align-items: center;
`;

const CommandCaret = styled.span`
  display: flex;
  margin: auto 0 5px;
`;

const ToolGrid = styled.div`
  display: grid;
  grid-template-columns: repeat(3, 27px) 15px;
  grid-template-rows: repeat(3, 17px);
  padding-left: 3px;
  flex: none;
`;

const GridTool = styled.button`
  display: flex;
  align-items: center;
`;

const CommandList = styled.div`
  display: grid;
  grid-template-rows: repeat(3, 17px);
  width: 132px;
  flex: none;
  padding: 0 4px 0 3px;
`;

const ListCommand = styled.button`
  display: flex;
  align-items: center;
  gap: 4px;
  color: #b4b4b4;

  ${Caret} {
    margin-left: auto;
  }
`;

/* command tabs */

const TabsBar = styled.div`
  display: flex;
  height: 19px;
  flex: none;
`;

const Tabs = styled.div`
  display: flex;
  border-bottom: 1px solid #858585;
`;

const Tab = styled.button`
  width: ${({ $width }) => $width}px;
  padding-top: 1px;
  color: #303030;
  background: ${({ $active }) => ($active ? '#f6f6f6' : '#d2d2d2')};
  font-weight: ${({ $active }) => ($active ? 700 : 400)};
  border-right: 1px solid #858585;
`;

const ViewToolbar = styled.div`
  display: flex;
  margin-left: 17px;
`;

const ViewTool = styled.button`
  display: flex;
  align-items: center;
`;

const DocumentTools = styled.div`
  display: flex;
  margin-left: auto;
  padding: 1px 4px 0 0;
  color: #979797;
`;

/* feature tree */

const Workspace = styled.main`
  display: flex;
  flex: 1;
  min-height: 0;
`;

const Panel = styled.aside`
  display: flex;
  flex-direction: column;
  width: 182px;
  flex: none;
  background: #f6f6f6;
  border-left: 1px solid #b9b9b9;
  border-right: 1px solid #b9b9b9;
  border-bottom: 1px solid #b9b9b9;
`;

const PanelTop = styled.div`
  height: 19px;
  flex: none;
  padding: 6px 0 0 87px;
  border-top: 1px solid #999;
`;

const Grip = styled.span`
  display: block;
  width: 4px;
  height: 4px;
  border: 1px solid #999;
  border-radius: 50%;
`;

const PanelTabs = styled.div`
  display: flex;
  height: 18px;
  flex: none;
  overflow: hidden;
  border-top: 1px solid #999;
`;

const PanelTab = styled.button`
  ${center}
  width: ${({ $narrow }) => ($narrow ? '15px' : '27px')};
  flex: ${({ $narrow }) => ($narrow ? 'none' : '1')};
  background: ${({ $active }) => ($active ? '#f6f6f6' : '#d2d2d2')};
  border-right: 1px solid ${({ $narrow }) => ($narrow ? '#ccc' : '#8f8f8f')};
  border-bottom: 1px solid ${({ $active }) => ($active ? '#f6f6f6' : '#999')};
`;

const PanelArrow = styled.button`
  ${center}
  width: 15px;
  background: #fff;
  border-right: 1px solid #ccc;
`;

const FilterBox = styled.label`
  display: flex;
  align-items: center;
  height: 21px;
  flex: none;
  margin: 0 3px 0 2px;
  padding-left: 1px;
  border: 1px solid #ccc;
`;

const FilterInput = styled.input`
  flex: 1;
`;

const TreeRoot = styled.div`
  display: flex;
  align-items: center;
  gap: 2px;
  height: 16px;
  flex: none;
  padding-left: 2px;
  overflow: hidden;
  white-space: nowrap;
`;

const Tree = styled.ul`
  flex: 1;
  margin: 0;
  padding: 0;
  list-style: none;
`;

const TreeItem = styled.li`
  display: flex;
  align-items: center;
  gap: 3px;
  position: relative;
  height: 16px;
  white-space: nowrap;
  color: ${({ $muted }) => ($muted ? '#999' : '#1c1c1c')};

  &::after {
    content: ${({ $rollback }) => ($rollback ? '""' : 'none')};
    position: absolute;
    bottom: -2px;
    left: 0;
    right: 1px;
    height: 3px;
    background: #3b88b8;
  }
`;

const Expander = styled.span`
  ${center}
  width: 13px;
`;

const PanelScroll = styled.div`
  display: flex;
  align-items: center;
  height: 13px;
  flex: none;
  margin-bottom: 3px;
  padding-left: 14px;
  background: #efefef;
`;

const Thumb = styled.span`
  width: 127px;
  height: 2px;
  background: #8a8a8a;
`;

/* graphics area */

const Canvas = styled.section`
  position: relative;
  flex: 1;
  min-width: 0;
  background: #fff;
`;

const ModelSvg = styled.svg`
  display: block;
  width: 100%;
  height: 100%;
`;

const TriadSvg = styled.svg`
  position: absolute;
  left: 18px;
  bottom: 21px;
`;

const AxisLabel = styled.text`
  fill: ${({ $color }) => $color};
  font-family: "Liberation Sans", sans-serif;
  font-size: 8px;
`;

const PanelHandle = styled.button`
  ${center}
  position: absolute;
  top: 250px;
  left: -1px;
  width: 9px;
  height: 33px;
  background: #f6f6f6;
  border: 1px solid #b4b4b4;
  border-left: 0;
`;

const TaskPane = styled.div`
  position: absolute;
  top: 36px;
  right: 0;
  display: flex;
  flex-direction: column;
  border: 1px solid #aaa;
  border-right: 0;
`;

const TaskButton = styled.button`
  ${center}
  width: 20px;
  height: 20px;
  background: ${({ $active }) => ($active ? '#f6f6f6' : '#d2d2d2')};
  border-bottom: 1px solid #aaa;

  &:last-child {
    height: 19px;
    border-bottom: 0;
  }
`;

/* bottom bars */

const BottomTabs = styled.div`
  display: flex;
  height: 14px;
  flex: none;
  padding-left: 18px;
  background: #f6f6f6;
  border-top: 1px solid #777;
  border-bottom: 1px solid #aaa;
`;

const NavButtons = styled.div`
  display: flex;
  padding-right: 1px;
  background: #a5a5bb;
`;

const NavButton = styled.button`
  ${center}
  width: 13px;
  border: 1px solid #8f8fa8;
  border-left-color: #b9b9ca;
`;

const BottomTab = styled.button`
  display: flex;
  align-items: center;
  width: ${({ $width }) => $width}px;
  padding-left: 9px;
  color: ${({ $active }) => ($active ? '#000' : '#303030')};
  background: ${({ $active }) => ($active ? '#fff' : '#d2d2d2')};
  font-weight: ${({ $active }) => ($active ? 700 : 400)};
  border-right: 1px solid #999;
`;

const StatusBar = styled.footer`
  display: flex;
  align-items: center;
  height: 14px;
  flex: none;
  padding-top: 2px;
  background: #e5e5e5;
`;

const StatusText = styled.span`
  flex: 1;
  padding-left: 1px;
`;

const Units = styled.span`
  margin: 0 16px 0 54px;

  & + ${Caret} {
    margin-right: 17px;
  }
`;
